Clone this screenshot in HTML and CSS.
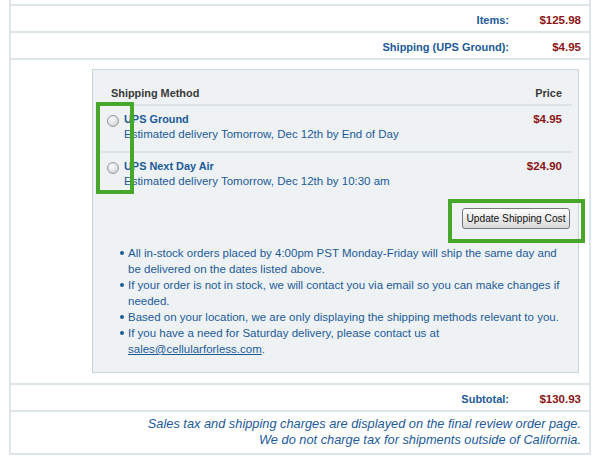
FILE: index.html
```html
<!DOCTYPE html>
<html>
<head>
    <meta charset="UTF-8">
    <title>Shipping</title>
    <link rel="stylesheet" href="styles.css">
</head>
<body>
    <div class="cart">
        <div class="row row-top"></div>
        <div class="row total">
            <span class="label">Items:</span>
            <span class="amount">$125.98</span>
        </div>
        <div class="row total">
            <span class="label">Shipping (UPS Ground):</span>
            <span class="amount">$4.95</span>
        </div>
        <div class="row ship-row">
            <div class="ship-box">
                <div class="ship-head">
                    <span>Shipping Method</span>
                    <span>Price</span>
                </div>
                <div class="method">
                    <input type="radio" name="ship" class="radio">
                    <div class="method-text">
                        <div class="method-name">UPS Ground</div>
                        <div class="method-desc">Estimated delivery Tomorrow, Dec 12th by End of Day</div>
                    </div>
                    <span class="method-price">$4.95</span>
                </div>
                <div class="method">
                    <input type="radio" name="ship" class="radio">
                    <div class="method-text">
                        <div class="method-name">UPS Next Day Air</div>
                        <div class="method-desc">Estimated delivery Tomorrow, Dec 12th by 10:30 am</div>
                    </div>
                    <span class="method-price">$24.90</span>
                </div>
                <div class="update">
                    <button type="button" class="btn">Update Shipping Cost</button>
                </div>
                <ul class="notes">
                    <li>All in-stock orders placed by 4:00pm PST Monday-Friday will ship the same day and be delivered on the dates listed above.</li>
                    <li>If your order is not in stock, we will contact you via email so you can make changes if needed.</li>
                    <li>Based on your location, we are only displaying the shipping methods relevant to you.</li>
                    <li>If you have a need for Saturday delivery, please contact us at <a href="#">sales@cellularforless.com</a>.</li>
                </ul>
                <!-- annotation boxes -->
                <div class="mark mark-radio"></div>
                <div class="mark mark-btn"></div>
            </div>
        </div>
        <div class="row total">
            <span class="label">Subtotal:</span>
            <span class="amount">$130.93</span>
        </div>
        <div class="row tax-note">
            Sales tax and shipping charges are displayed on the final review order page.<br>
            We do not charge tax for shipments outside of California.
        </div>
    </div>
</body>
</html>
```

FILE: styles.css
```css
html, body {margin: 0; padding: 0; background: #ffffff;}
body {font: 11.5px "Liberation Sans", Arial, sans-serif; color: #1c5a98;}

.cart {
    margin-left: 9px;
    width: 578px;
    border-left: 2px solid #dce5e9;
    border-right: 2px solid #dce5e9;
}
.row {border-bottom: 2px solid #dce5e9;}
.row-top {height: 4px;}

.total {
    display: flex;
    justify-content: flex-end;
    align-items: center;
    height: 27px;
    font-weight: bold;
    font-size: 11px;
    padding-right: 8px;
    padding-top: 3px;
    box-sizing: border-box;
}
.total .label {color: #1c5a98;}
.total .amount {width: 72px; text-align: right; color: #8b1414; font-size: 11.5px;}

.ship-row {padding: 9px 10px 10px 81px;}
.ship-box {
    position: relative;
    background: #eef2f4;
    border: 1px solid #c9d7dd;
    padding: 0 6px 15px 8px;
}
.ship-head {
    display: flex;
    justify-content: space-between;
    padding: 17px 10px 5px 10px;
    color: #3a3a3a;
    font-weight: bold;
    font-size: 10.9px;
    border-bottom: 2px solid #dbe3e7;
}
.method {
    display: flex;
    align-items: flex-start;
    padding: 6px 10px 8px 6px;
    border-bottom: 2px solid #dbe3e7;
    height: 31px;
}
.method + .method {border-bottom: none;}
.radio {
    appearance: none;
    -webkit-appearance: none;
    width: 12px;
    height: 12px;
    margin: 3px 5px 0 0;
    border: 1px solid #9a9a9a;
    border-radius: 50%;
    background: radial-gradient(circle at 40% 35%, #ffffff 0, #dcdcdc 60%, #c4c4c4 100%);
}
.method-text {flex: 1; line-height: 15px;}
.method-name {font-weight: bold; font-size: 10.9px;}
.method-price {color: #8b1414; font-weight: bold; line-height: 15px; font-size: 11.5px;}

.update {
    display: flex;
    justify-content: flex-end;
    padding: 10px 0 0 0;
}
.btn {
    font: 10.2px "Liberation Sans", Arial, sans-serif;
    white-space: nowrap;
    color: #111111;
    height: 21px;
    width: 108px;
    margin-right: 2px;
    padding: 0;
    border: 1px solid #777777;
    border-radius: 3px;
    background: linear-gradient(#fdfdfd, #e9e9e9 55%, #d9d9d9);
}

.notes {
    margin: 16px 0 0 0;
    padding: 0 0 0 27px;
    line-height: 16px;
    list-style: none;
}
.notes li {position: relative;}
.notes li::before {
    content: "";
    position: absolute;
    left: -8px;
    top: 6px;
    width: 4px;
    height: 4px;
    border-radius: 50%;
    background: #1c5a98;
}
.notes a {color: #1c5a98;}

.mark {position: absolute; border: 4px solid #47a72a;}
.mark-radio {left: 3px; top: 32px; width: 30px; height: 84px;}
.mark-btn {left: 355px; top: 129px; width: 129px; height: 36px;}

.tax-note {
    text-align: right;
    font-style: italic;
    font-size: 12.8px;
    line-height: 16px;
    padding: 4px 8px 5px 0;
}
```
